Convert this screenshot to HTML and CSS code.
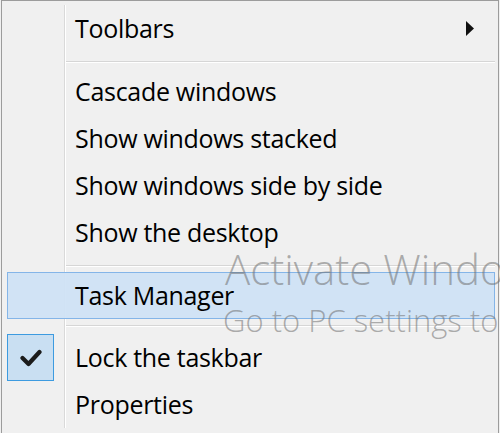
FILE: index.html
```html
<!DOCTYPE html>
<html>
<head>
<meta charset="utf-8">
<link rel="stylesheet" href="styles.css">
</head>
<body>
<div class="menu">
  <div class="items">
    <div class="item">
      <span class="icon"></span>
      <span class="label">Toolbars</span>
      <svg class="arrow" width="8" height="15" viewBox="0 0 8 15"><polygon points="0,0 8,7.5 0,15" fill="#111"/></svg>
    </div>
    <div class="sep"></div>
    <div class="item"><span class="icon"></span><span class="label">Cascade windows</span></div>
    <div class="item"><span class="icon"></span><span class="label">Show windows stacked</span></div>
    <div class="item"><span class="icon"></span><span class="label">Show windows side by side</span></div>
    <div class="item"><span class="icon"></span><span class="label">Show the desktop</span></div>
    <div class="sep"></div>
    <div class="item is-hover"><span class="icon"></span><span class="label">Task Manager</span></div>
    <div class="sep sep-tight"></div>
    <div class="item">
      <span class="icon is-checked">
        <svg width="22" height="18" viewBox="0 0 22 18"><polyline points="2.5,9 8.5,15 19.5,3" fill="none" stroke="#1b1b1b" stroke-width="4.2" stroke-linecap="round" stroke-linejoin="round"/></svg>
      </span>
      <span class="label">Lock the taskbar</span>
    </div>
    <div class="item"><span class="icon"></span><span class="label">Properties</span></div>
  </div>
</div>
<div class="watermark">
  <div class="wm-title">Activate Windows</div>
  <div class="wm-sub">Go to PC settings to activate Windows.</div>
</div>
</body>
</html>
```
FILE: styles.css
```css
html, body {
  margin: 0;
  padding: 0;
  width: 500px;
  height: 433px;
  overflow: hidden;
  background: #f0f0f0;
}

body {
  font-family: "Open Sans", "Noto Sans", sans-serif;
  color: #000;
  position: relative;
}

.menu {
  margin-left: 1px;
  width: 498px;
  box-sizing: border-box;
  border: 1px solid #9c9c9c;
  border-bottom: none;
  padding: 4px 3px 30px 5px;
  background: #f0f0f0;
}

.items {
  background: linear-gradient(90deg, transparent 57px, #d9d9d9 57px, #d9d9d9 58px, #ffffff 58px, #ffffff 59px, transparent 59px);
}

.item {
  display: grid;
  grid-template-columns: 47px 1fr auto;
  align-items: center;
  height: 47px;
  font-size: 25px;
  letter-spacing: -0.3px;
  line-height: 47px;
  white-space: nowrap;
}

.item.is-hover {
  background: rgba(207, 226, 245, 0.93);
  box-shadow: inset 0 0 0 1px #84b5e8;
}

.icon {
  width: 47px;
  height: 47px;
  box-sizing: border-box;
  display: flex;
  align-items: center;
  justify-content: center;
}

.icon.is-checked {
  background: #c9dff2;
  border: 1px solid #3d9be0;
}

.label {
  padding-left: 21px;
}

.arrow {
  display: block;
  margin-right: 21px;
}

.sep {
  margin: 9px 0 5px 59px;
  height: 2px;
  box-sizing: border-box;
  border-top: 1px solid #d6d6d6;
  border-bottom: 1px solid #ffffff;
}

.sep.sep-tight {
  margin: 6px 0 7px 59px;
}

.watermark {
  position: absolute;
  left: 223px;
  top: 243px;
  color: rgba(110, 110, 110, 0.55);
  font-family: "Open Sans", "Noto Sans", sans-serif;
  font-weight: 300;
  white-space: nowrap;
  pointer-events: none;
}

.wm-title {
  font-size: 42px;
  line-height: 52px;
  padding-left: 2px;
}

.wm-sub {
  font-size: 31px;
  line-height: 50px;
}
```
